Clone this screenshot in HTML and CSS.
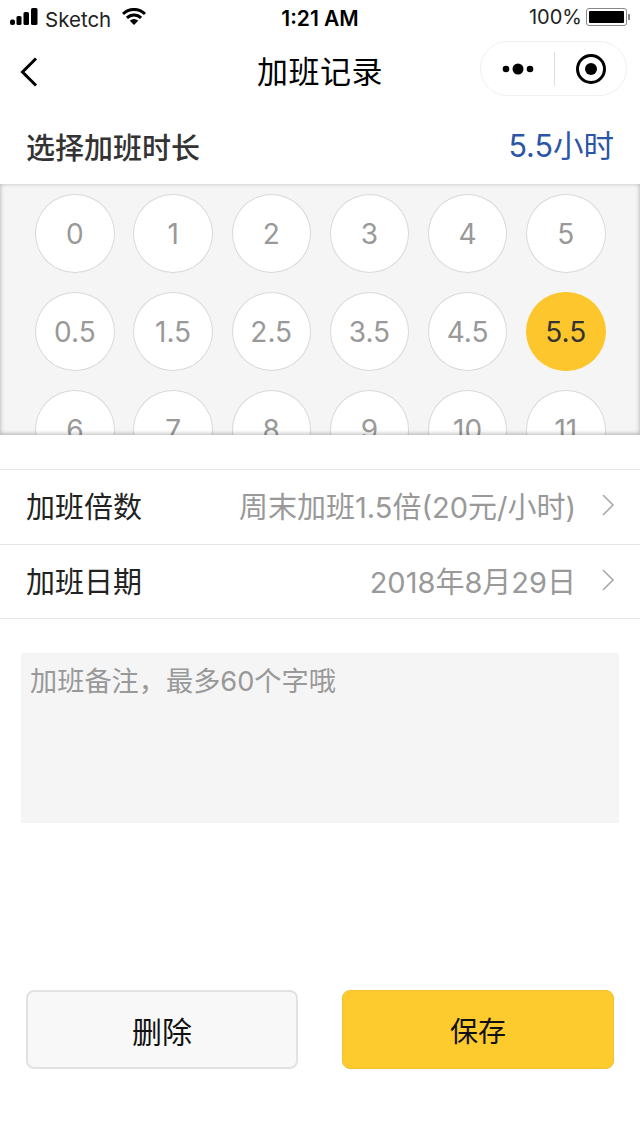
FILE: index.html
```html
<!DOCTYPE html>
<html lang="zh">
<head>
<meta charset="utf-8">
<title>加班记录</title>
<link rel="stylesheet" href="styles.css">
</head>
<body>
<div class="status">
  <div class="status-left">
    <svg class="signal" width="28" height="18" viewBox="0 0 28 18"><rect x="0" y="11.500" width="5" height="5.500" rx="2"/><rect x="6.500" y="8" width="5" height="9" rx="1.500"/><rect x="13.500" y="4" width="5.500" height="13" rx="1.500"/><rect x="21" y="0" width="6.500" height="17" rx="1.500"/></svg>
    <span class="carrier">Sketch</span>
    <svg class="wifi" width="24" height="18" viewBox="0 0 24 18"><path d="M1 6A15.500 15.500 0 0 1 23 6" fill="none" stroke="#000" stroke-width="3"/><path d="M4.900 9.900A10 10 0 0 1 19.100 9.900" fill="none" stroke="#000" stroke-width="3"/><path d="M12 17L7.800 12.800A6 6 0 0 1 16.200 12.800Z"/></svg>
  </div>
  <div class="clock">1:21 AM</div>
  <div class="status-right">
    <span class="pct">100%</span>
    <span class="battery"><span class="battery-fill"></span></span>
    <span class="battery-tip"></span>
  </div>
</div>
<header class="nav">
  <svg class="back" width="20" height="32" viewBox="0 0 20 32"><path d="M17 2.500L3.500 16L17 29.500" fill="none" stroke="#000" stroke-width="3"/></svg>
  <h1 class="nav-title">加班记录</h1>
  <div class="capsule">
    <svg class="more" width="32" height="12" viewBox="0 0 32 12"><circle cx="4" cy="6" r="3.300"/><circle cx="16" cy="6" r="5.500"/><circle cx="28" cy="6" r="3.300"/></svg>
    <span class="capsule-sep"></span>
    <svg class="target" width="32" height="32" viewBox="0 0 32 32"><circle cx="16" cy="16" r="13.500" fill="none" stroke="#000" stroke-width="3"/><circle cx="16" cy="16" r="6"/></svg>
  </div>
</header>
<section class="summary">
  <div class="summary-label">选择加班时长</div>
  <div class="summary-value">5.5小时</div>
</section>
<section class="picker">
  <div class="grid">
    <div class="hour">0</div><div class="hour">1</div><div class="hour">2</div><div class="hour">3</div><div class="hour">4</div><div class="hour">5</div>
    <div class="hour">0.5</div><div class="hour">1.5</div><div class="hour">2.5</div><div class="hour">3.5</div><div class="hour">4.5</div><div class="hour active">5.5</div>
    <div class="hour">6</div><div class="hour">7</div><div class="hour">8</div><div class="hour">9</div><div class="hour">10</div><div class="hour">11</div>
  </div>
</section>
<section class="rows">
  <div class="row">
    <span class="row-label">加班倍数</span>
    <span class="row-value">周末加班1.5倍(20元/小时)</span>
    <svg class="chev" width="14" height="24" viewBox="0 0 14 24"><path d="M2 2L12 12L2 22" fill="none" stroke="#aaa" stroke-width="1.600"/></svg>
  </div>
  <div class="row">
    <span class="row-label">加班日期</span>
    <span class="row-value">2018年8月29日</span>
    <svg class="chev" width="14" height="24" viewBox="0 0 14 24"><path d="M2 2L12 12L2 22" fill="none" stroke="#aaa" stroke-width="1.600"/></svg>
  </div>
</section>
<div class="note">加班备注，最多60个字哦</div>
<div class="actions">
  <button class="btn btn-del">删除</button>
  <button class="btn btn-save">保存</button>
</div>
</body>
</html>
```
FILE: styles.css
```css
* { box-sizing: border-box; }
html, body { margin: 0; padding: 0; }
body {
  width: 640px;
  height: 1138px;
  overflow: hidden;
  background: #fff;
  color: #000;
  font-family: Inter, "Noto Sans CJK SC", sans-serif;
}
.status {
  height: 40px;
  display: flex;
  align-items: center;
  justify-content: space-between;
  position: relative;
  padding: 0 10px;
}
.status-left { display: flex; align-items: center; }
.signal { margin-top: -6px; }
.carrier { font-size: 20.500px; margin-left: 7px; margin-top: -2px; color: #222; }
.wifi { margin-left: 11px; margin-top: -6px; }
.clock {
  position: absolute;
  left: 0;
  right: 0;
  text-align: center;
  font-size: 21px;
  font-weight: 600;
  margin-top: -4px;
}
.status-right { display: flex; align-items: center; margin-top: -6px; }
.pct { font-size: 20px; color: #222; margin-right: 4px; }
.battery {
  width: 41px;
  height: 18px;
  border: 1px solid #888;
  border-radius: 3px;
  padding: 2px;
  display: flex;
}
.battery-fill { flex: 1; background: #000; border-radius: 1px; }
.battery-tip { width: 2px; height: 6px; background: #888; margin-left: 1px; }
.nav {
  height: 64px;
  display: flex;
  align-items: center;
  position: relative;
  padding: 0 13px 0 19px;
  justify-content: space-between;
}
.back { display: block; margin-top: -1px; }
.nav-title {
  position: absolute;
  left: 0;
  right: 0;
  text-align: center;
  margin: 0;
  font-size: 31px;
  font-weight: 400;
  line-height: 64px;
  letter-spacing: 0.500px;
}
.capsule {
  position: relative;
  width: 147px;
  height: 55px;
  border: 1px solid #f0f0f0;
  border-radius: 28px;
  display: flex;
  align-items: center;
  padding-left: 21px;
  margin-top: -7px;
}
.capsule-sep { width: 1px; height: 34px; background: #ddd; margin-left: 20px; margin-right: 20px; }
.summary {
  height: 80px;
  padding: 0 26px;
  display: flex;
  align-items: center;
  justify-content: space-between;
}
.summary-label { font-size: 29px; font-weight: 500; color: #333; margin-top: 4px; }
.summary-value { font-size: 30.500px; color: #2b55a6; }
.picker {
  height: 251px;
  background: #f5f5f5;
  overflow: hidden;
  padding: 10px 0 0 35.200px;
  position: relative;
}
.picker::after {
  content: "";
  position: absolute;
  inset: 0;
  box-shadow: inset 0 0 5px rgba(0,0,0,.2), inset 0 -2px 4px rgba(0,0,0,.12);
}
.grid {
  display: grid;
  grid-template-columns: repeat(6, 79.400px);
  grid-auto-rows: 79px;
  column-gap: 18.800px;
  row-gap: 19.200px;
}
.hour {
  border: 1px solid #d9d9d9;
  border-radius: 50%;
  background: #fff;
  color: #999;
  font-size: 28px;
  display: flex;
  align-items: center;
  justify-content: center;
}
.hour.active { background: #fdc62c; border-color: #fdc62c; color: #333; }
.rows { margin-top: 34px; border-top: 1px solid #e5e5e5; }
.row {
  height: 74.500px;
  display: flex;
  align-items: center;
  border-bottom: 1px solid #e5e5e5;
  padding: 0 25px 3px 26px;
}
.row-label { font-size: 29px; color: #222; flex: 1; }
.row-value { font-size: 29px; color: #999; margin-right: 25px; }
.chev { display: block; }
.note {
  margin: 34px 21px 0;
  height: 170px;
  background: #f5f5f5;
  padding: 11px 9px;
  font-size: 27.200px;
  line-height: 36px;
  color: #999;
}
.actions {
  margin-top: 167px;
  padding: 0 26px;
  display: flex;
  justify-content: space-between;
}
.btn {
  width: 272px;
  height: 79px;
  border-radius: 8px;
  font-family: inherit;
  font-size: 30px;
  color: #111;
  padding: 0;
}
.btn-del { background: #f8f8f8; border: 2px solid #e2e2e2; }
.btn-save { background: #fecb2e; border: 1px solid #f0c030; font-size: 28px; }
```
